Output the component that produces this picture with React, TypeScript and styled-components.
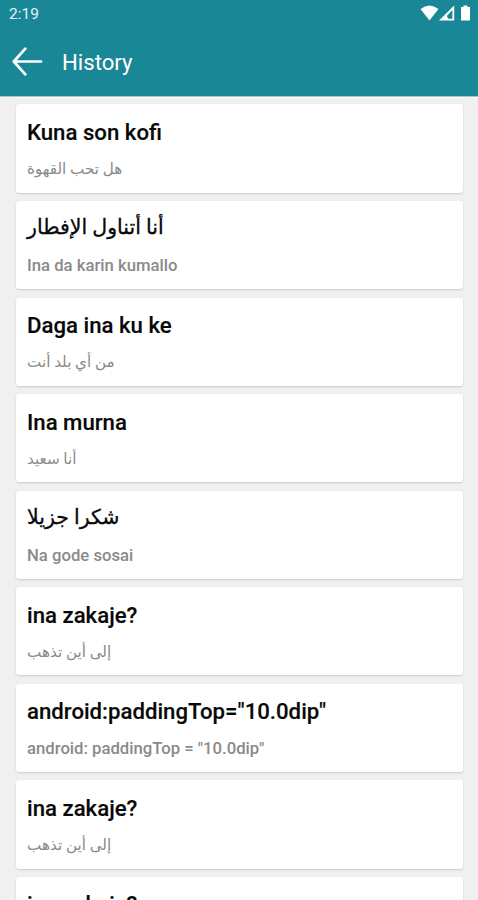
import React from "react";
import styled, { createGlobalStyle } from "styled-components";

const Global = createGlobalStyle`
  * { box-sizing: border-box; }
  body { margin: 0; background: #f0f0f0; overflow: hidden; font-family: Roboto, "DejaVu Sans", sans-serif; }
`;
const Screen = styled.main`height: 900px; overflow: hidden; background: #f0f0f0;`;
const Header = styled.header`height: 96px; background: #1a8796; color: #fff; box-shadow: 0 1px 0 #a9c5c9, 0 2px 0 #f8f8f8;`;
const StatusBar = styled.div`height: 28px; display: flex; align-items: center; justify-content: space-between; padding: 0 7px 2px 9px; color: #e3f4f6;`;
const Clock = styled.span`padding-top: 2px; font-size: 15.5px; line-height: 18px;`;
const Toolbar = styled.div`height: 68px; display: flex; align-items: center; padding-left: 11px; gap: 19px;`;
const Title = styled.h1`margin: 0; font-size: 22.2px; font-weight: 400; line-height: 67px;`;
const List = styled.section`padding: 8.4px 15px 0 16px; display: flex; flex-direction: column; gap: 8.4px;`;
const Card = styled.article`height: 88.2px; flex: none; background: #fff; border-radius: 3px; box-shadow: 0 1px 2px #00000028; padding: 13.4px 11px 0;`;
const Phrase = styled.h2<{ $arabic?: boolean }>`
  margin: 0; height: 30px; white-space: nowrap; color: #080808; font-weight: 500;
  line-height: ${p => (p.$arabic ? 27 : 29)}px;
  font-size: ${p => (p.$arabic ? 20.5 : 22.2)}px;
  -webkit-text-stroke: ${p => (p.$arabic ? 0.3 : 0.15)}px currentColor;
`;
const Translation = styled.p<{ $arabic?: boolean }>`
  margin: ${p => (p.$arabic ? 10 : 11)}px 0 0; line-height: 22px; white-space: nowrap; color: #8a8a8a;
  font-size: ${p => (p.$arabic ? 15.2 : 16.7)}px; font-weight: ${p => (p.$arabic ? 400 : 500)};
`;

const items = [
  ["Kuna son kofi", "هل تحب القهوة"],
  ["أنا أتناول الإفطار", "Ina da karin kumallo"],
  ["Daga ina ku ke", "من أي بلد أنت"],
  ["Ina murna", "أنا سعيد"],
  ["شكرا جزيلا", "Na gode sosai"],
  ["ina zakaje?", "إلى أين تذهب"],
  ['android:paddingTop="10.0dip"', 'android: paddingTop = "10.0dip"'],
  ["ina zakaje?", "إلى أين تذهب"],
  ["ina zakaje?", "إلى أين تذهب"],
];
const isArabic = (s: string) => /[\u0600-\u06ff]/.test(s);

export default function App() {
  return (
    <Screen>
      <Global />
      <Header>
        <StatusBar>
          <Clock>2:19</Clock>
          <svg width="51" height="16" viewBox="0 0 51 16" fill="#fff">
            <path d="M.5 4Q9.5-3 18.5 4L9.5 15.5Z" />
            <path fillRule="evenodd" d="M34.2.5V15.5H19ZM32.4 5L27 10.8Q27 13 28.5 13.7H32.4Z" />
            <path d="M41 2h2.5V.5h4V2H50v13.5h-9z" />
          </svg>
        </StatusBar>
        <Toolbar>
          <svg width="32" height="30" viewBox="0 0 32 30" fill="none" stroke="#fff" strokeWidth="2.7" strokeLinecap="round" strokeLinejoin="round">
            <path d="M30 14.5H3M14.3 1.7L2.8 14.5L14.3 27.3" />
          </svg>
          <Title>History</Title>
        </Toolbar>
      </Header>
      <List>
        {items.map(([a, b], i) => (
          <Card key={i}>
            <Phrase $arabic={isArabic(a)}>{a}</Phrase>
            <Translation $arabic={isArabic(b)}>{b}</Translation>
          </Card>
        ))}
      </List>
    </Screen>
  );
}
